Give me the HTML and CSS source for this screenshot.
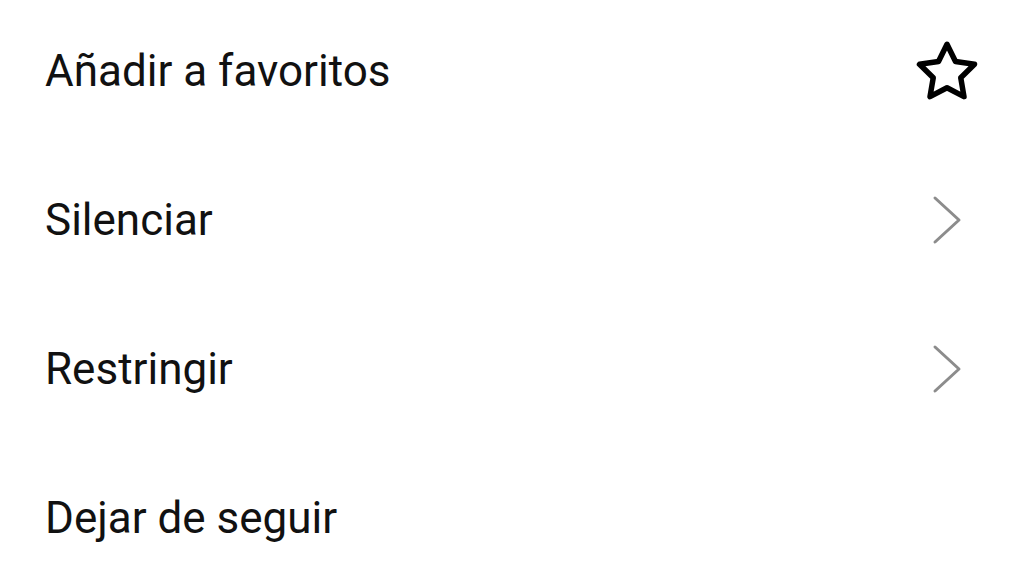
FILE: index.html
```html
<!DOCTYPE html>
<html lang="es">
<head>
  <meta charset="UTF-8" />
  <meta name="viewport" content="width=device-width, initial-scale=1.0"/>
  <title>Opciones</title>
  <link rel="stylesheet" href="styles.css">
</head>
<body>
  <ul class="menu">
    <li class="menu-item">
      <span class="label">Añadir a favoritos</span>
      <span class="icon">
        <svg width="66" height="66" viewBox="0 0 24 24" fill="none" stroke="#000" stroke-width="2" stroke-linejoin="round">
          <path d="M12 2.3l3.09 6.26L22 9.57l-5 4.87 1.18 6.88L12 18.07l-6.18 3.25L7 14.44 2 9.57l6.91-1.01L12 2.3z"/>
        </svg>
      </span>
    </li>
    <li class="menu-item">
      <span class="label">Silenciar</span>
      <span class="icon">
        <svg width="60" height="60" viewBox="0 0 60 60" fill="none" stroke="#8c8c8c" stroke-width="3" stroke-linecap="round" stroke-linejoin="round">
          <path d="M18 8L42 30L18 52"/>
        </svg>
      </span>
    </li>
    <li class="menu-item">
      <span class="label">Restringir</span>
      <span class="icon">
        <svg width="60" height="60" viewBox="0 0 60 60" fill="none" stroke="#8c8c8c" stroke-width="3" stroke-linecap="round" stroke-linejoin="round">
          <path d="M18 8L42 30L18 52"/>
        </svg>
      </span>
    </li>
    <li class="menu-item">
      <span class="label">Dejar de seguir</span>
    </li>
  </ul>
</body>
</html>
```

FILE: styles.css
```css
* { margin: 0; padding: 0; box-sizing: border-box; }

html, body {
  width: 100%;
  height: 100%;
  background-color: #fff;
  font-family: Roboto, 'Noto Sans', sans-serif;
  color: #111;
  overflow: hidden;
}

.menu {
  list-style: none;
  margin-top: -4px;
}

.menu-item {
  display: flex;
  align-items: center;
  justify-content: space-between;
  height: 149px;
  padding: 0 47px 0 45px;
}

.label {
  font-size: 44px;
  line-height: 1;
}

.icon {
  width: 60px;
  height: 60px;
  display: flex;
  align-items: center;
  justify-content: center;
}

.icon svg {
  flex-shrink: 0;
}
```
